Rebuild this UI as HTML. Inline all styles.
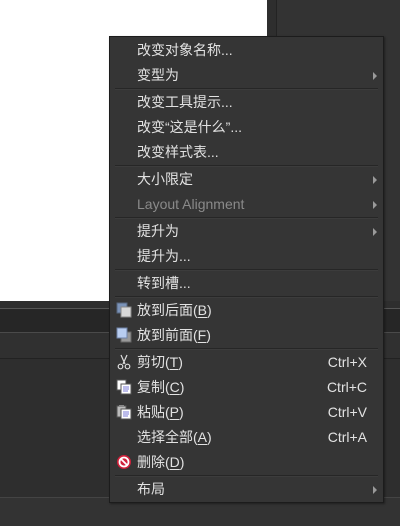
<!DOCTYPE html>
<html><head><meta charset="utf-8"><style>
*{margin:0;padding:0;box-sizing:border-box}
body{width:400px;height:526px;overflow:hidden;background:#333;position:relative;font-family:"Liberation Sans","Noto Sans CJK SC",sans-serif}
.abs{position:absolute}
.menu{position:absolute;left:109px;top:36px;width:275px;height:467px;padding-top:1px;background:#353535;border:1px solid #1c1c1c;box-shadow:1px 1px 2px rgba(0,0,0,.4)}
.it{position:relative;height:25px;line-height:25px;color:#e2e2e2;font-size:14px;padding-left:27px}
.it.dis{color:#8a8a8a}
.sep{height:2px;margin:0 5px 0 5px;border-top:1px solid #262626;border-bottom:1px solid #3c3c3c}
.sc{position:absolute;right:16px;top:0;font-size:14px}
.ar{position:absolute;right:6px;top:9px;width:0;height:0;border-left:4px solid #9a9a9a;border-top:4px solid transparent;border-bottom:4px solid transparent}
.ic{position:absolute;left:6px;top:4px;width:16px;height:16px}
u{text-decoration:underline;text-underline-offset:2px}
</style></head><body>
<div class="abs" style="left:0;top:0;width:267px;height:301px;background:#fff"></div>
<div class="abs" style="left:267px;top:0;width:9px;height:301px;background:#2e2e2e"></div>
<div class="abs" style="left:276px;top:0;width:1px;height:301px;background:#232323"></div>
<div class="abs" style="left:0;top:301px;width:400px;height:7px;background:#2e2e2e"></div>
<div class="abs" style="left:0;top:308px;width:400px;height:1px;background:#555"></div>
<div class="abs" style="left:0;top:309px;width:400px;height:23px;background:#262626"></div>
<div class="abs" style="left:0;top:332px;width:400px;height:1px;background:#4a4a4a"></div>
<div class="abs" style="left:0;top:333px;width:400px;height:25px;background:#303030"></div>
<div class="abs" style="left:0;top:358px;width:400px;height:1px;background:#222"></div>
<div class="abs" style="left:0;top:359px;width:400px;height:138px;background:#2e2e2e"></div>
<div class="abs" style="left:0;top:497px;width:400px;height:1px;background:#444"></div>
<div class="menu">
<div class="it">改变对象名称...</div>
<div class="it">变型为<span class="ar"></span></div>
<div class="sep"></div>
<div class="it">改变工具提示...</div>
<div class="it">改变“这是什么”...</div>
<div class="it">改变样式表...</div>
<div class="sep"></div>
<div class="it">大小限定<span class="ar"></span></div>
<div class="it dis">Layout Alignment<span class="ar"></span></div>
<div class="sep"></div>
<div class="it">提升为<span class="ar"></span></div>
<div class="it">提升为...</div>
<div class="sep"></div>
<div class="it">转到槽...</div>
<div class="sep"></div>
<div class="it"><svg class="ic" viewBox="0 0 16 16"><rect x="1" y="1" width="10" height="10" fill="#7b93b8" stroke="#56667e"/><rect x="5" y="5" width="10" height="10" fill="#d8d8d8" stroke="#888"/></svg>放到后面(<u>B</u>)</div>
<div class="it"><svg class="ic" viewBox="0 0 16 16"><rect x="5" y="5" width="10" height="10" fill="#999" stroke="#666"/><rect x="1" y="1" width="10" height="10" fill="#b8cdf0" stroke="#6f84a8"/></svg>放到前面(<u>F</u>)</div>
<div class="sep"></div>
<div class="it"><svg class="ic" viewBox="0 0 16 16" fill="none" stroke="#ddd" stroke-width="1.2"><path d="M5 1L9 10M11 1L7 10"/><circle cx="4.5" cy="12.5" r="2.3"/><circle cx="11.5" cy="12.5" r="2.3"/></svg>剪切(<u>T</u>)<span class="sc">Ctrl+X</span></div>
<div class="it"><svg class="ic" viewBox="0 0 16 16"><rect x="1" y="1" width="9" height="10" fill="#fff" stroke="#555"/><rect x="5" y="5" width="10" height="10" fill="#fff" stroke="#555"/><path d="M7 8h6M7 10h6M7 12h5" stroke="#7b7bd8"/></svg>复制(<u>C</u>)<span class="sc">Ctrl+C</span></div>
<div class="it"><svg class="ic" viewBox="0 0 16 16"><rect x="1" y="2" width="9" height="11" fill="#bbb" stroke="#555"/><rect x="3" y="1" width="5" height="2" fill="#888"/><rect x="5" y="5" width="10" height="10" fill="#fff" stroke="#555"/><path d="M7 8h6M7 10h6M7 12h5" stroke="#7b7bd8"/></svg>粘贴(<u>P</u>)<span class="sc">Ctrl+V</span></div>
<div class="it">选择全部(<u>A</u>)<span class="sc">Ctrl+A</span></div>
<div class="it"><svg class="ic" viewBox="0 0 16 16"><circle cx="8" cy="8" r="7" fill="#d0203a"/><circle cx="8" cy="8" r="4.5" fill="none" stroke="#fff" stroke-width="1.8"/><path d="M5 5L11 11" stroke="#fff" stroke-width="1.8"/></svg>删除(<u>D</u>)</div>
<div class="sep"></div>
<div class="it">布局<span class="ar"></span></div>
</div>
</body></html>
